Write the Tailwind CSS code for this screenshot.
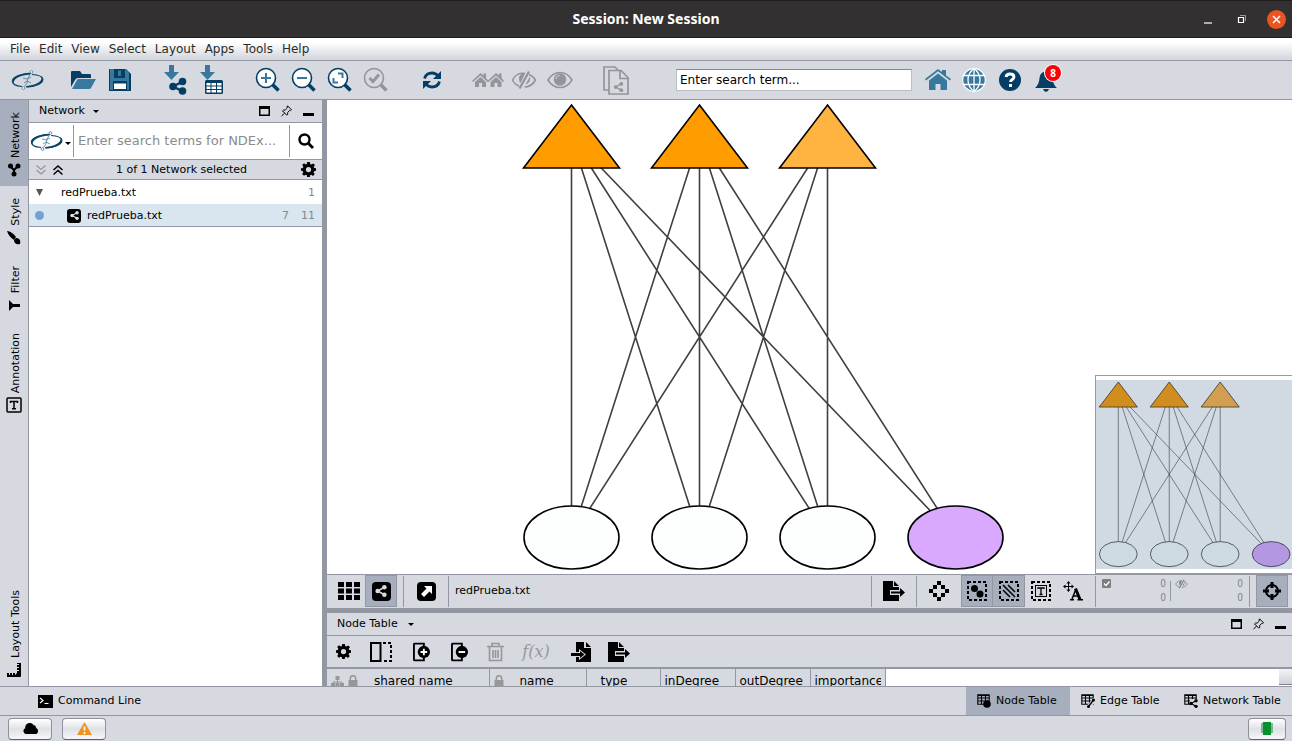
<!DOCTYPE html>
<html lang="en">
<head>
    <meta charset="UTF-8">
    <meta name="viewport" content="width=device-width, initial-scale=1.0">
    <script src="https://cdn.jsdelivr.net/npm/@tailwindcss/browser@4"></script>
    <title>Session: New Session</title>
</head>
<body class="flex h-screen flex-col overflow-hidden bg-[#d6d9e0] font-['DejaVu_Sans',sans-serif] text-[11px] leading-4 text-black">

    <!-- shared icons -->
    <svg class="hidden">
        <symbol id="logo" viewBox="0 0 34 22">
            <path d="M20 4.500C10 4.500 2 8 1.500 12c-.2 3 4 5 9.500 5.500" fill="none" stroke="#0b4668" stroke-width="1.200"/>
            <path d="M19 3.800C9 4.300 1 8 .8 12c0 1.500 1 2.800 2.400 3.600C.5 11 8 6 19 5.400z" fill="#0b4668"/>
            <path d="M21 5.500c6 .3 10.500 2.200 10.700 5C32 14 25 17.500 15 17.800" fill="none" stroke="#0b4668" stroke-width="1.200"/>
            <path d="M30 7c3.500 2 3 5.500-1 8-3.500 2.200-8 3.500-13 3.600v-1.800C24 16.500 33 12 30 7z" fill="#0b4668"/>
            <path d="M20 4l-3 5-1 5-3 4M12 9l4 1 4-2M13 14l3-2 4 2" fill="none" stroke="#4b7d9c" stroke-width=".8"/>
            <circle cx="20.500" cy="3" r="1.400" fill="#fff" stroke="#4b7d9c" stroke-width=".8"/>
            <circle cx="12.500" cy="19" r="1.400" fill="#fff" stroke="#4b7d9c" stroke-width=".8"/>
        </symbol>
        <symbol id="share" viewBox="0 0 16 16">
            <path d="M12.500 3L3.500 8l9 5" fill="none" stroke="currentColor" stroke-width="2"/>
            <circle cx="12.500" cy="3" r="3" fill="currentColor"/><circle cx="3.500" cy="8" r="3" fill="currentColor"/><circle cx="12.500" cy="13" r="3" fill="currentColor"/>
        </symbol>
        <symbol id="float" viewBox="0 0 12 12"><path d="M0 1h11v10H0zM1.500 4v5.500h8V4z" fill="currentColor" fill-rule="evenodd"/></symbol>
        <symbol id="pin" viewBox="0 0 12 12"><path d="M6.500.8l4 4-1 .8-.8-.2-2 2 .1 1.800-1 1L1.500 5.900l1-.9 1.700.1L6.300 3l-.3-1zM3.700 8.100L.5 11" fill="none" stroke="currentColor"/></symbol>
        <symbol id="mini" viewBox="0 0 12 12"><path d="M0 8h11v3H0z" fill="currentColor"/></symbol>
        <symbol id="gear" viewBox="0 0 16 16">
            <path d="M6.600 0h2.800l.4 2.200 1.300.5L13 1.500 14.900 3.300 13.600 5l.5 1.400 1.900.3v2.700l-2 .4-.6 1.300 1.300 1.800-1.900 1.900-1.800-1.200-1.300.5L9.400 16H6.600l-.4-2-1.300-.5-1.700 1.200-2-1.900 1.200-1.700L1.900 9.700 0 9.400V6.700l2-.4.5-1.300-1.200-1.700 1.900-1.900 1.800 1.300 1.200-.5zM8 5.200a2.800 2.800 0 1 0 0 5.600 2.800 2.800 0 0 0 0-5.600z" fill="currentColor" fill-rule="evenodd"/>
        </symbol>
        <symbol id="export" viewBox="0 0 22 20">
            <path d="M0 0h10v6h6v3H7v5h9v6H0zM11 0l5 5h-5z" fill="currentColor"/>
            <path d="M8 10.500h9V7l5 4.500-5 4.500v-3.500H8z" fill="currentColor"/>
        </symbol>
        <symbol id="lens" viewBox="0 0 26 26">
            <circle cx="11" cy="11" r="9.500" fill="#fff" fill-opacity="var(--lens,1)" stroke="currentColor" stroke-width="1.600"/>
            <path d="M17.500 17.500l6 6" stroke="currentColor" stroke-width="3.600"/>
        </symbol>
        <symbol id="eye" viewBox="0 0 26 18">
            <path d="M1 9c3-5 7.500-7.500 12-7.500S22 4 25 9c-3 5-7.500 7.500-12 7.500S4 14 1 9z" fill="none" stroke="currentColor" stroke-width="1.600"/>
            <circle cx="13" cy="8.500" r="6.200" fill="currentColor"/><path d="M9 8c0-2 1.500-3.500 3.500-3.500" fill="none" stroke="#d6d9e0"/>
        </symbol>
        <symbol id="eyeoff" viewBox="0 0 26 20">
            <path d="M14 3.500C9 2.500 4 5 1.500 10c1.500 3 3.500 5 6.500 6M18 4.500c3 1 5 3 6.500 5.500-2.500 4.500-6.500 7-11 7" fill="none" stroke="currentColor" stroke-width="1.600"/>
            <path d="M14 3.500C9 3 7 7 8.500 11.500l1 1.500zM17 1l2 1-9.500 17-2-1zM19 6.500c.8 4-1 7-4.500 8z" fill="currentColor"/>
        </symbol>
        <symbol id="tablegrid" viewBox="0 0 14 14">
            <path d="M.8.8h11.400v9.400H.8zM.5 1.500h12M1 4h11M1 7h11M4.500 1v9M8.500 1v9" fill="none" stroke="currentColor" stroke-width="1.100"/>
        </symbol>
        <symbol id="lock" viewBox="0 0 10 12"><path d="M2.300 6V3.500a2.700 2.700 0 0 1 5.400 0V6" fill="none" stroke="currentColor" stroke-width="1.500"/><path d="M.5 5h9v6.500h-9z" fill="currentColor"/></symbol>
        <symbol id="sheetcol" viewBox="0 0 20 20"><path d="M1 2a1 1 0 0 1 1-1h9.500v18H2a1 1 0 0 1-1-1z" fill="none" stroke="currentColor" stroke-width="2"/><circle cx="11.500" cy="10" r="6.500" fill="currentColor"/></symbol>
        <!-- network graph, drawn full size and again in the overview -->
        <g id="graph">
            <path d="M244.500 37V437M244.500 37l128 400M244.500 37l256 400M244.500 37l384 400M372.500 37l-128 400M372.500 37v400M372.500 37l128 400M372.500 37l256 400M500.500 37l-256 400M500.500 37l-128 400M500.500 37v400" fill="none" stroke="#404040" stroke-width="1.600"/>
            <g stroke="#000" stroke-width="1.600">
                <path d="M244.500 5l48 63h-96zM372.500 5l48 63h-96z" fill="#ff9d00"/>
                <path d="M500.500 5l48 63h-96z" fill="#ffb340"/>
                <g fill="#fcfffe"><ellipse cx="244.500" cy="437.500" rx="47.500" ry="31.500"/><ellipse cx="372.500" cy="437.500" rx="47.500" ry="31.500"/><ellipse cx="500.500" cy="437.500" rx="47.500" ry="31.500"/></g>
                <ellipse cx="628.500" cy="437.500" rx="47.500" ry="31.500" fill="#d9a8ff"/>
            </g>
        </g>
    </svg>

    <!-- title bar -->
    <header class="relative flex h-[38px] shrink-0 items-center justify-end border-y border-[#1f1d1e] bg-[#333031] text-white">
        <h1 class="absolute inset-x-0 text-center font-['Noto_Sans',sans-serif] text-sm leading-6 font-bold">Session: New Session</h1>
        <div class="z-10 flex items-center gap-5 pr-[6px]">
            <button aria-label="Minimize" class="mr-1"><svg class="h-[10px] w-[10px]"><path d="M1 9h8" stroke="#fff" stroke-width="1.200"/></svg></button>
            <button aria-label="Restore"><svg class="h-[10px] w-[10px]"><path d="M1.500 3.500h5v5h-5z" fill="none" stroke="#fff" stroke-width="1.200"/><path d="M3 1.500h5.500V7" fill="none" stroke="#999"/></svg></button>
            <button aria-label="Close" class="flex h-[19px] w-[19px] items-center justify-center rounded-full bg-[#e95420]"><svg class="h-[9px] w-[9px]"><path d="M1 1l7 7M8 1L1 8" stroke="#fff" stroke-width="1.500"/></svg></button>
        </div>
    </header>

    <!-- menu -->
    <nav class="flex h-[23px] shrink-0 items-center gap-[9px] border-b border-[#9297a1] bg-linear-to-b from-white from-20% to-[#d6d9e0] to-90% pl-[10px] text-xs text-[#2b2b2b]">
        <button>File</button><button>Edit</button><button>View</button><button>Select</button><button>Layout</button><button>Apps</button><button>Tools</button><button>Help</button>
    </nav>

    <!-- toolbar -->
    <div class="flex h-[39px] shrink-0 items-center border-b border-[#9297a1] pl-[10px] text-[#043e64]">
        <button aria-label="Cytoscape" class="mr-5 flex w-9 justify-center"><svg class="h-[22px] w-[34px]"><use href="#logo"/></svg></button>
        <button aria-label="Open" class="flex w-9 justify-center"><svg class="h-5 w-[26px]" viewBox="0 0 26 20"><path d="M0 17V2Q0 1 1 1h8l2 3h8q1 0 1 1v3H7q-2 0-3 2z" fill="#043e64"/><path d="M1 19l5-9q.5-1 2-1h17l-5 9q-.5 1-2 1z" fill="#38789f"/></svg></button>
        <button aria-label="Save" class="mr-5 flex w-9 justify-center"><svg class="h-6 w-6" viewBox="0 0 24 24"><path d="M1 1h17l5 5v17H1z" fill="#043e64"/><path d="M2 1h16l3 4v17H2z" fill="#38789f"/><path d="M6 1h11v9H6z" fill="#043e64"/><path d="M10 2.500h3v5.500h-3z" fill="#38789f"/><path d="M5 13h14v10H5z" fill="#043e64"/><path d="M6 15.500h12V21H6z" fill="#fff"/></svg></button>
        <button aria-label="Import network" class="flex w-9 justify-center"><svg class="h-[30px] w-6" viewBox="0 0 24 30"><path d="M5 0h5v7h5l-7.500 8L0 7h5z" fill="#38789f"/><path d="M18 17L9 21.500l9 4.500" fill="none" stroke="#043e64" stroke-width="2.500"/><g fill="#043e64"><circle cx="18.500" cy="16.500" r="3.800"/><circle cx="9" cy="21.500" r="3.800"/><circle cx="18.500" cy="26" r="3.800"/></g></svg></button>
        <button aria-label="Import table" class="mr-5 flex w-9 justify-center"><svg class="h-[30px] w-6" viewBox="0 0 24 30"><path d="M5 0h5v7h5l-7.500 8L0 7h5z" fill="#38789f"/><rect x="5" y="15" width="18" height="14" rx="1.500" fill="#043e64"/><path d="M6.500 18h4v2.500h-4zm5 0h4.500v2.500h-4.500zm5.500 0h4.500v2.500H17zM6.500 21.500h4V24h-4zm5 0h4.500V24h-4.500zm5.500 0h4.500V24H17zM6.500 25h4v2.500h-4zm5 0h4.500v2.500h-4.500zm5.500 0h4.500v2.500H17z" fill="#fff"/></svg></button>
        <button aria-label="Zoom in" class="flex w-9 justify-center"><svg class="h-[26px] w-[26px]"><use href="#lens"/><path d="M11 6v10M6 11h10" stroke="#38789f" stroke-width="2"/></svg></button>
        <button aria-label="Zoom out" class="flex w-9 justify-center"><svg class="h-[26px] w-[26px]"><use href="#lens"/><path d="M6 11h10" stroke="#38789f" stroke-width="2"/></svg></button>
        <button aria-label="Fit content" class="flex w-9 justify-center"><svg class="h-[26px] w-[26px]"><use href="#lens"/><path d="M11 6.500h4.500V11M6.500 11v4.500H11" fill="none" stroke="#38789f" stroke-width="2"/></svg></button>
        <button aria-label="Fit selected" class="mr-5 flex w-9 justify-center text-[#949599] [--lens:0]"><svg class="h-[26px] w-[26px]"><use href="#lens"/><path d="M6.500 11l3.500 3.500 6-7" fill="none" stroke="#949599" stroke-width="3"/></svg></button>
        <button aria-label="Apply layout" class="mr-5 flex w-9 justify-center"><svg class="h-5 w-5" viewBox="0 0 20 20"><path d="M2.500 8.500C3.500 5 6.500 3 10 3c2.500 0 4.500 1 6 3M17.500 11.500C16.500 15 13.500 17 10 17c-2.500 0-4.500-1-6-3" fill="none" stroke="#043e64" stroke-width="2.800"/><path d="M19 1v8h-8zM1 19v-8h8z" fill="#043e64"/></svg></button>
        <button aria-label="First neighbors" class="flex w-9 justify-center"><svg class="h-5 w-8" viewBox="0 0 32 20" fill="#949599"><path id="cot" d="M0 11L8.500 3l3 2.500V3.500h2.500V8l2.500 3-1 1-7-6.500L1 12zM3 12l5.500-5 5.500 5v5h-4v-4H7v4H3z"/><use href="#cot" x="15.500"/></svg></button>
        <button aria-label="Hide selected" class="flex w-9 justify-center text-[#949599]"><svg class="h-5 w-[26px]"><use href="#eyeoff"/></svg></button>
        <button aria-label="Show all" class="mr-5 flex w-9 justify-center text-[#949599]"><svg class="h-[18px] w-[26px]"><use href="#eye"/></svg></button>
        <button aria-label="New network from selection" class="flex w-9 justify-center text-[#949599]"><svg class="h-[29px] w-[26px]" viewBox="0 0 26 29"><path d="M6 24H1V1h11l3 3M6 4.500h12l7 7V28H6zM17 5v7.500h8" fill="none" stroke="currentColor" stroke-width="1.700"/><svg x="10" y="16" width="11" height="10"><use href="#share"/></svg></svg></button>
        <input aria-label="Search" placeholder="Enter search term..." class="mr-2 ml-[42px] h-[22px] w-[236px] border border-[#bbbdc2] border-t-[#85878c] bg-white px-[3px] text-xs text-black outline-none placeholder:text-black">
        <button aria-label="Home" class="flex w-9 justify-center"><svg class="h-[22px] w-[26px]" viewBox="0 0 26 22" fill="#38789f"><path d="M0 10L13 0l4 3V1h4v5.500l5 3.500-1 1.500L13 2.200 1 11.500zM4 11.500l9-7 9 7V21h-6.500v-6h-5v6H4z"/></svg></button>
        <button aria-label="Web" class="flex w-9 justify-center"><svg class="h-6 w-6" viewBox="0 0 24 24"><circle cx="12" cy="12" r="11.500" fill="#38789f"/><path d="M12 0v24M1 7.500h22M1 16.500h22M12 .6c-8 6-8 17 0 22.800M12 .6c8 6 8 17 0 22.800" fill="none" stroke="#fff" stroke-width="1.300"/><circle cx="12" cy="12" r="11.300" fill="none" stroke="#fff" stroke-width="1.200"/></svg></button>
        <button aria-label="Help" class="flex w-9 justify-center"><svg class="h-[22px] w-[22px]" viewBox="0 0 22 22"><circle cx="11" cy="11" r="11" fill="#043e64"/><path d="M7 8c.3-2 1.800-3 4-3 2.500 0 4 1.200 4 3 0 2.500-3.500 2.500-3.500 5" fill="none" stroke="#fff" stroke-width="2.800"/><path d="M10 15h3v3h-3z" fill="#fff"/></svg></button>
        <button aria-label="Notifications" class="relative flex w-9 justify-center"><svg class="h-6 w-6" viewBox="0 0 24 24"><path d="M1 20c3-3 4-5 4.500-10C6 6 8 4 11 3.500V2h2v1.500c3 .5 5 2.500 5.500 6.500.5 5 1.500 7 4.500 10zM9 21h6q-1 3-3 3t-3-3z" fill="#043e64"/></svg>
            <span class="absolute -top-[3px] left-[17px] h-4 w-4 rounded-full bg-[#fb0007] text-center font-['Noto_Sans',sans-serif] text-[10px] leading-4 font-bold text-white ring-1 ring-white">8</span></button>
    </div>

    <main class="flex min-h-0 flex-1">
        <!-- side tabs -->
        <nav class="flex w-[29px] shrink-0 flex-col border-r border-[#9297a1]">
            <button class="flex flex-col items-center gap-1 bg-[#a7afbe] pt-3 pb-2"><span class="ml-[3px] rotate-180 [writing-mode:vertical-rl]">Network</span><svg class="h-4 w-4"><path d="M4 4l4 4 4-4M8 8v5" fill="none" stroke="#000" stroke-width="2"/><circle cx="4.500" cy="4" r="2.500"/><circle cx="12" cy="4" r="2.500"/><circle cx="8" cy="12" r="2.500"/></svg></button>
            <button class="flex flex-col items-center gap-1 pt-3 pb-2"><span class="ml-[3px] rotate-180 [writing-mode:vertical-rl]">Style</span><svg class="h-4 w-4"><path d="M1 1c3 0 7 3 9 6L8 10C5 8 2 5 1 1z"/><path d="M10 8c3 0 5 2 4 6-4 1-6-1-6-4z"/></svg></button>
            <button class="flex flex-col items-center gap-1 pt-3 pb-2"><span class="ml-[3px] rotate-180 [writing-mode:vertical-rl]">Filter</span><svg class="h-4 w-4"><path d="M3 3v11l4-4h7V7H7z"/></svg></button>
            <button class="flex flex-col items-center gap-1 pt-3 pb-2"><span class="ml-[3px] rotate-180 [writing-mode:vertical-rl]">Annotation</span><svg class="h-4 w-4"><rect x="1" y="1" width="14" height="14" rx="1" fill="none" stroke="#000" stroke-width="1.500"/><path d="M4.500 6V4.500h7V6M8 4.500v7M6 11.800h4" fill="none" stroke="#000" stroke-width="1.500"/></svg></button>
            <button class="mt-auto flex flex-col items-center gap-1 pt-3 pb-2"><span class="ml-[3px] rotate-180 [writing-mode:vertical-rl]">Layout Tools</span><svg class="h-4 w-4"><path d="M11 1h4v13q0 1-1 1H1v-4h2v2h1v-2h2v2h1v-2h2v2l2-2V9h2V8h-2V6h2V5h-2V3h2V2h-2z"/></svg></button>
        </nav>

        <!-- network panel -->
        <section class="flex w-[298px] shrink-0 flex-col border-r-[5px] border-[#9297a1] bg-white">
            <div class="flex h-[23px] items-center border-b border-[#9297a1] bg-[#d6d9e0] pr-[7px] pl-[10px]">
                <button class="flex items-center gap-2">Network<svg class="h-[3px] w-[6px]" viewBox="0 0 6 3"><path d="M0 0h6L3 3z"/></svg></button>
                <div class="ml-auto flex gap-[10px]">
                    <button aria-label="Float"><svg class="h-3 w-3"><use href="#float"/></svg></button>
                    <button aria-label="Pin"><svg class="h-3 w-3"><use href="#pin"/></svg></button>
                    <button aria-label="Minimize panel"><svg class="h-3 w-3"><use href="#mini"/></svg></button>
                </div>
            </div>
            <div class="flex h-[37px] items-center border-b border-[#9297a1]">
                <button aria-label="Search source" class="flex items-center gap-px pl-px"><svg class="h-[22px] w-[34px]"><use href="#logo"/></svg><svg class="mt-1 h-[3px] w-[6px]" viewBox="0 0 6 3"><path d="M0 0h6L3 3z"/></svg></button>
                <input aria-label="Search NDEx" placeholder="Enter search terms for NDEx..." class="ml-[2px] h-8 min-w-0 flex-1 border-x border-[#9297a1] px-1 pb-[2px] text-[13px] outline-none placeholder:text-[#8b8b8b]">
                <button aria-label="Search" class="flex w-8 justify-center"><svg class="h-4 w-4"><circle cx="6.500" cy="6.500" r="5" fill="none" stroke="#000" stroke-width="2.400"/><path d="M10 10l5 5" stroke="#000" stroke-width="2.800"/></svg></button>
            </div>
            <div class="flex h-5 items-center border-b border-[#9297a1] bg-[#d6d9e0] pr-[6px] pl-[6px]">
                <button aria-label="Expand all"><svg class="h-3 w-3"><path d="M1.500 1.500L6 5.500l4.500-4M1.500 6L6 10l4.500-4" fill="none" stroke="#979797" stroke-width="1.300"/></svg></button>
                <button aria-label="Collapse all" class="ml-[5px]"><svg class="h-3 w-3"><path d="M1.500 6L6 2l4.500 4M1.500 10.500l4.500-4 4.500 4" fill="none" stroke="#000" stroke-width="1.500"/></svg></button>
                <span class="flex-1 pl-6 text-center">1 of 1 Network selected</span>
                <button aria-label="Options" class="ml-[26px]"><svg class="h-[15px] w-[15px]"><use href="#gear"/></svg></button>
            </div>
            <div class="flex h-[24px] items-center pt-px pr-[7px] pl-[7px]">
                <svg class="h-[7px] w-[8px]"><path d="M0 0h7L3.500 7z" fill="#555"/></svg>
                <span class="ml-[17px] flex-1">redPrueba.txt</span>
                <span class="text-[#868686]">1</span>
            </div>
            <div class="flex h-[23px] items-center border-b border-[#9297a1] bg-[#dae6ef] pt-px pr-[7px] pl-[6px]">
                <span class="h-[9px] w-[9px] rounded-full bg-[#73a1d4]"></span>
                <span class="ml-[23px] flex h-[14px] w-[14px] items-center justify-center rounded-[3px] bg-black text-[#dae6ef]"><svg class="h-[9px] w-[9px]"><use href="#share"/></svg></span>
                <span class="ml-[6px] flex-1">redPrueba.txt</span>
                <span class="mr-3 text-[#868686]">7</span><span class="text-[#868686]">11</span>
            </div>
        </section>

        <div class="flex min-w-0 flex-1 flex-col">
            <!-- canvas with overview -->
            <section class="relative min-h-0 flex-1 overflow-hidden bg-white">
                <svg class="h-full w-full"><use href="#graph"/></svg>
                <div class="absolute right-0 bottom-0 h-[199px] w-[197px] overflow-hidden border border-r-0 border-[#78a3cf] bg-white">
                    <svg class="h-full w-full"><g transform="translate(-75 4) scale(.398)"><use href="#graph"/></g><path d="M0 4h197v189H0z" fill="#375e81" fill-opacity=".23"/></svg>
                </div>
            </section>

            <!-- view toolbar -->
            <div class="flex h-[34px] shrink-0 items-center border-t border-[#9297a1] pr-1 pb-px pl-[6px]">
                <button aria-label="Grid view" class="flex w-8 justify-center"><svg class="h-[18px] w-[22px]" viewBox="0 0 22 18"><path d="M0 0h6v5H0zM8 0h6v5H8zM16 0h6v5h-6zM0 6.500h6v5H0zM8 6.500h6v5H8zM16 6.500h6v5h-6zM0 13h6v5H0zM8 13h6v5H8zM16 13h6v5h-6z"/></svg></button>
                <button aria-label="Network view" class="flex h-8 w-8 items-center justify-center border border-[#9297a1] bg-[#a7afbe]"><span class="flex h-[19px] w-[19px] items-center justify-center rounded-[4px] bg-black text-[#d6d9e0]"><svg class="h-3 w-3"><use href="#share"/></svg></span></button>
                <span class="mx-[6px] h-[31px] w-px bg-[#9297a1]"></span>
                <button aria-label="Detach view" class="flex w-8 justify-center"><svg class="h-[19px] w-[19px]"><rect width="19" height="19" rx="4"/><path d="M7 4h8v8l-2.500-2.500-5.500 5.500-3-3L9.500 6.500z" fill="#fff"/></svg></button>
                <span class="mx-[6px] h-[31px] w-px bg-[#9297a1]"></span>
                <span class="flex-1">redPrueba.txt</span>
                <span class="mx-[6px] h-[31px] w-px bg-[#9297a1]"></span>
                <button aria-label="Export" class="flex w-8 justify-center"><svg class="h-5 w-[22px]"><use href="#export"/></svg></button>
                <span class="mx-[6px] h-[31px] w-px bg-[#9297a1]"></span>
                <button aria-label="Bends" class="mr-[6px] flex w-8 justify-center"><svg class="h-5 w-5"><path d="M8 0h4v4H8zM4 4h4v4H4zM12 4h4v4h-4zM0 8h4v4H0zM16 8h4v4h-4zM4 12h4v4H4zM12 12h4v4h-4zM8 16h4v4H8z"/></svg></button>
                <button aria-label="Select nodes" class="flex h-8 w-8 items-center justify-center border border-[#9297a1] bg-[#a7afbe]"><svg class="h-5 w-5"><rect x="1" y="1" width="18" height="18" fill="none" stroke="#000" stroke-width="2" stroke-dasharray="3 2"/><circle cx="7.500" cy="7.500" r="3.500"/><circle cx="13" cy="13" r="3.500"/></svg></button>
                <button aria-label="Select edges" class="flex h-8 w-8 items-center justify-center border border-l-0 border-[#9297a1] bg-[#a7afbe]"><svg class="h-5 w-5"><rect x="1" y="1" width="18" height="18" fill="none" stroke="#000" stroke-width="2" stroke-dasharray="3 2"/><path d="M4 9l7 7M4 4l12 12M9 4l7 7" stroke="#000" stroke-width="1.500"/></svg></button>
                <button aria-label="Select annotations" class="flex h-8 w-8 items-center justify-center"><svg class="h-5 w-5"><rect x="1" y="1" width="18" height="18" fill="none" stroke="#000" stroke-width="2" stroke-dasharray="3 2"/><rect x="4.500" y="4.500" width="11" height="11" fill="none" stroke="#000"/><path d="M7 8V7h6v1M10 7v6M8.500 13.500h3" fill="none" stroke="#000" stroke-width="1.300"/></svg></button>
                <button aria-label="Select labels" class="flex h-8 w-8 items-center justify-center"><svg class="h-5 w-5"><path d="M5.500 1v9M1 5.500h9" stroke="#000"/><path d="M5.500 0l2 2.500h-4zM5.500 11l2-2.500h-4zM0 5.500l2.500-2v4zM11 5.500l-2.500-2v4z"/><path d="M9 18l4-10" stroke="#000" stroke-width="1.500"/><path d="M12.500 7.500l4.500 11" stroke="#000" stroke-width="3"/><path d="M10 15h6M7 18.700h4M14.500 18.700h5.500" stroke="#000" stroke-width="1.500"/></svg></button>
                <span class="mx-[6px] h-[31px] w-px bg-[#9297a1]"></span>
                <div class="flex h-[28px] w-[141px] font-['DejaVu_Sans_Condensed','DejaVu_Sans',sans-serif] text-[10px] leading-[14px] text-[#7e8187]">
                    <svg class="mt-[2px] h-[9px] w-[9px]"><rect width="9" height="9" rx="1" fill="#7e7e7e"/><path d="M2 4.500l2 2 3.500-4" fill="none" stroke="#fff" stroke-width="1.300"/></svg>
                    <span class="flex-1 text-right">0<br>0</span>
                    <span class="mx-1 mt-1 h-5 w-px bg-[#9297a1]"></span>
                    <svg class="mt-[2px] h-[10px] w-[13px]"><use href="#eyeoff"/></svg>
                    <span class="flex-1 text-right">0<br>0</span>
                </div>
                <span class="mx-[6px] h-[31px] w-px bg-[#9297a1]"></span>
                <button aria-label="Toggle overview" class="flex h-8 w-8 items-center justify-center border border-[#9297a1] bg-[#a7afbe]"><svg class="h-[18px] w-[18px]"><circle cx="9" cy="9" r="6" fill="none" stroke="#000" stroke-width="2"/><path d="M7.500 0h3v6h-3zM7.500 12h3v6h-3zM0 7.500h6v3H0zM12 7.500h6v3h-6z"/></svg></button>
            </div>

            <!-- node table panel -->
            <section class="shrink-0 border-t-[5px] border-[#9297a1]">
                <div class="flex h-[23px] items-center border-b border-[#9297a1] pr-[5px] pl-[10px]">
                    <button class="flex items-center gap-[10px]">Node Table<svg class="h-[3px] w-[6px]" viewBox="0 0 6 3"><path d="M0 0h6L3 3z"/></svg></button>
                    <div class="ml-auto flex gap-[10px]">
                        <button aria-label="Float"><svg class="h-3 w-3"><use href="#float"/></svg></button>
                        <button aria-label="Pin"><svg class="h-3 w-3"><use href="#pin"/></svg></button>
                        <button aria-label="Minimize panel"><svg class="h-3 w-3"><use href="#mini"/></svg></button>
                    </div>
                </div>
                <div class="flex h-[33px] items-center border-b-2 border-[#9297a1]">
                    <button aria-label="Table options" class="flex w-8 justify-center"><svg class="h-[15px] w-[15px]"><use href="#gear"/></svg></button>
                    <button aria-label="Show columns" class="flex w-11 justify-center"><svg class="h-5 w-[22px]"><path d="M1 1h9.500v18H1z" fill="none" stroke="#000" stroke-width="2"/><path d="M13 1h8v18h-9" fill="none" stroke="#000" stroke-width="2" stroke-dasharray="3 2"/></svg></button>
                    <button aria-label="Create column" class="flex w-9 justify-center"><svg class="h-5 w-[17px]" viewBox="0 0 18 20"><svg width="20" height="20"><use href="#sheetcol"/></svg><path d="M11.500 6.500v7M8 10h7" stroke="#fff" stroke-width="2"/></svg></button>
                    <button aria-label="Delete column" class="flex w-10 justify-center"><svg class="h-5 w-[17px]" viewBox="0 0 18 20"><svg width="20" height="20"><use href="#sheetcol"/></svg><path d="M8 10h7" stroke="#fff" stroke-width="2"/></svg></button>
                    <button aria-label="Delete table" class="flex w-[34px] justify-center"><svg class="h-5 w-[18px]"><path d="M0 4.500h17M5 4V1.500h7V4M2.500 5v13.500h12V5M6 8v8M8.500 8v8M11 8v8" fill="none" stroke="#979797" stroke-width="1.600"/></svg></button>
                    <button class="w-[46px] text-center font-['DejaVu_Serif',serif] text-base text-[#979797] italic">f(x)</button>
                    <button aria-label="Import table" class="flex w-11 justify-center"><svg class="h-5 w-5"><path d="M5 0h8v6h7v14H5v-5h3v3l7-5.500L8 7v3H5zM15 0l5 5h-5zM0 11h9V9l4.500 3.500L9 16v-2H0z"/></svg></button>
                    <button aria-label="Export table" class="flex w-8 justify-center"><svg class="h-5 w-[22px]"><use href="#export"/></svg></button>
                </div>
                <div class="flex h-[17px] overflow-hidden bg-white">
                    <table class="h-6 w-[558px] table-fixed border-collapse bg-[#d6d9e0] text-xs">
                        <thead>
                            <tr class="[&>th]:overflow-hidden [&>th]:border-r [&>th]:border-[#9297a1] [&>th]:p-0 [&>th]:font-normal [&>th]:whitespace-nowrap">
                                <th class="w-[162px]"><div class="flex items-center pl-1 text-[#979797]"><svg class="h-[11px] w-[13px]"><path d="M6.500 3v4M2 8V6h9v2" fill="none" stroke="#979797"/><path d="M4.500 0h4v4h-4zM0 7h4v4H0zM4.500 7h4v4h-4zM9 7h4v4H9z" fill="#979797"/></svg><svg class="ml-1 h-3 w-[10px]"><use href="#lock"/></svg><span class="ml-4 text-black">shared name</span></div></th>
                                <th class="w-[97px]"><div class="flex items-center pl-1 text-[#979797]"><svg class="h-3 w-[10px]"><use href="#lock"/></svg><span class="ml-4 text-black">name</span></div></th>
                                <th class="w-[74px]"><div class="pr-5 pl-[14px] text-left">type</div></th>
                                <th class="w-[75px]"><div class="pl-1 text-left">inDegree</div></th>
                                <th class="w-[75px]"><div class="pl-1 text-left">outDegree</div></th>
                                <th class="w-[75px]"><div class="mr-1 ml-1 overflow-hidden text-left">importance</div></th>
                            </tr>
                        </thead>
                    </table>
                    <span class="ml-auto h-4 w-[13px] border-b border-[#808389] bg-linear-to-b from-[#f2f3f5] to-[#d0d3da]"></span>
                </div>
            </section>
        </div>
    </main>

    <!-- bottom tabs -->
    <nav class="flex h-[30px] shrink-0 border-y border-[#9297a1]">
        <button class="flex items-center gap-[5px] pl-[38px]"><svg class="h-[13px] w-[15px]"><rect width="15" height="13"/><path d="M2 3l3 2.500L2 8M6.500 8.500h4" fill="none" stroke="#fff" stroke-width="1.200"/></svg>Command Line</button>
        <button class="ml-auto flex w-[104px] items-center gap-[5px] bg-[#a7afbe] pl-[11px]"><svg class="h-[14px] w-[14px]"><use href="#tablegrid"/><circle cx="10" cy="10" r="3.800"/></svg>Node Table</button>
        <button class="flex w-[103px] items-center gap-[5px] pl-[11px]"><svg class="h-[14px] w-[14px]"><use href="#tablegrid"/><path d="M7 13.500L14 5" stroke="#d6d9e0" stroke-width="4"/><path d="M7.500 12.500L12.500 6" stroke="#000" stroke-width="1.300"/><circle cx="7.500" cy="12.500" r="1.500"/><circle cx="12.500" cy="6" r="1.500"/></svg>Edge Table</button>
        <button class="flex w-[119px] items-center gap-[5px] pl-[11px]"><svg class="h-[14px] w-[14px]"><use href="#tablegrid"/><path d="M6 5h8v9H6z" fill="#d6d9e0"/><svg x="5" y="5" width="9" height="9"><use href="#share"/></svg></svg>Network Table</button>
    </nav>

    <!-- status bar -->
    <footer class="flex h-[25px] shrink-0 items-center pr-[6px] pl-2">
        <button aria-label="Cloud" class="flex h-[22px] w-11 items-center justify-center rounded-[4px] border border-[#8e9198] border-b-[#5d6066] bg-linear-to-b from-white via-[#dfe1e6] to-[#f6f7f9]"><svg class="h-[11px] w-[15px]" viewBox="0 0 15 11"><path d="M3 11a3 3 0 0 1-.8-5.700C2 2 4 0 7 0c2 0 3 1 3.700 2.300C12 2 13 3 13 5c3 1 2.500 6-.5 6z"/></svg></button>
        <button aria-label="Warnings" class="ml-[10px] flex h-[22px] w-11 items-center justify-center rounded-[4px] border border-[#8e9198] border-b-[#5d6066] bg-linear-to-b from-white via-[#dfe1e6] to-[#f6f7f9]"><svg class="h-[13px] w-[15px]"><path d="M7.500 0L15 13H0z" fill="#ee9226"/><path d="M7.500 4.500v4M7.500 10v2" stroke="#fff" stroke-width="1.700"/></svg></button>
        <button aria-label="Memory" class="ml-auto flex h-[22px] w-[38px] items-center justify-center rounded-[4px] border border-[#8e9198] border-b-[#5d6066] bg-linear-to-b from-white via-[#dfe1e6] to-[#f6f7f9]"><svg class="h-[13px] w-3"><path d="M0 2h12M0 4h12M0 6h12M0 8h12M0 10h12" stroke="#0a8f2f"/><path d="M2 0h8v13H2z" fill="#0a8f2f"/></svg></button>
    </footer>
</body>
</html>
